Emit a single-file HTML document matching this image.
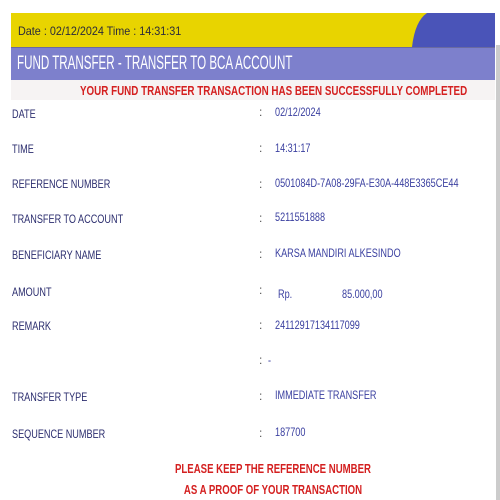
<!DOCTYPE html><html><head><style>
body{margin:0;width:500px;height:500px;background:#fff;position:relative;overflow:hidden;font-family:"Liberation Sans",sans-serif;}
.a{position:absolute;white-space:nowrap;transform-origin:0 0;}
.l{left:12px;font-size:12px;color:#2b2d6e;transform:scaleX(0.76);}
.c{left:259px;font-size:12px;color:#555;}
.v{left:275px;font-size:12px;color:#3b40a0;transform:scaleX(0.76);}
.r{color:#d42020;font-weight:bold;font-size:13px;}
</style></head><body>
<div class="a" style="left:11px;top:13px;width:484px;height:34px;background:#e8d400"></div>
<svg class="a" style="left:405px;top:13px" width="90" height="34"><path d="M22 0 Q10 8 7 34 L90 34 L90 0 Z" fill="#4a54b8"/></svg>
<div class="a" style="left:18px;top:24px;font-size:12px;color:#2a2a3a;transform:scaleX(0.9)">Date : 02/12/2024 Time : 14:31:31</div>
<div class="a" style="left:11px;top:47px;width:484px;height:33px;background:#7d80cc;border-top:1px solid #6a6aa0"></div>
<div class="a" style="left:17px;top:53px;font-size:19px;color:#fff;transform:scaleX(0.61)">FUND TRANSFER - TRANSFER TO BCA ACCOUNT</div>
<div class="a" style="left:11px;top:80px;width:484px;height:20px;background:#f6f3f3"></div>
<div class="a r" style="left:80px;top:83px;transform:scaleX(0.755)">YOUR FUND TRANSFER TRANSACTION HAS BEEN SUCCESSFULLY COMPLETED</div>
<div class="a" style="left:496px;top:45px;width:4px;height:455px;background:#ccc"></div>

<div class="a l" style="top:107px">DATE</div><div class="a c" style="top:105px">:</div><div class="a v" style="top:105px">02/12/2024</div>
<div class="a l" style="top:142px">TIME</div><div class="a c" style="top:141px">:</div><div class="a v" style="top:141px">14:31:17</div>
<div class="a l" style="top:177px">REFERENCE NUMBER</div><div class="a c" style="top:177px">:</div><div class="a v" style="top:176px">0501084D-7A08-29FA-E30A-448E3365CE44</div>
<div class="a l" style="top:212px">TRANSFER TO ACCOUNT</div><div class="a c" style="top:211px">:</div><div class="a v" style="top:210px">5211551888</div>
<div class="a l" style="top:248px">BENEFICIARY NAME</div><div class="a c" style="top:247px">:</div><div class="a v" style="top:246px">KARSA MANDIRI ALKESINDO</div>
<div class="a l" style="top:285px">AMOUNT</div><div class="a c" style="top:283px">:</div><div class="a v" style="top:287px;left:278px">Rp.</div><div class="a v" style="top:287px;left:342px">85.000,00</div>
<div class="a l" style="top:319px">REMARK</div><div class="a c" style="top:318px">:</div><div class="a v" style="top:318px">24112917134117099</div>
<div class="a c" style="top:353px">:</div><div class="a v" style="top:353px;left:268px">-</div>
<div class="a l" style="top:390px">TRANSFER TYPE</div><div class="a c" style="top:389px">:</div><div class="a v" style="top:388px">IMMEDIATE TRANSFER</div>
<div class="a l" style="top:427px">SEQUENCE NUMBER</div><div class="a c" style="top:426px">:</div><div class="a v" style="top:425px">187700</div>
<div class="a r" style="left:0;width:546px;text-align:center;top:461px;transform-origin:273px 0;transform:scaleX(0.74)">PLEASE KEEP THE REFERENCE NUMBER</div>
<div class="a r" style="left:0;width:546px;text-align:center;top:482px;transform-origin:273px 0;transform:scaleX(0.74)">AS A PROOF OF YOUR TRANSACTION</div>
</body></html>
